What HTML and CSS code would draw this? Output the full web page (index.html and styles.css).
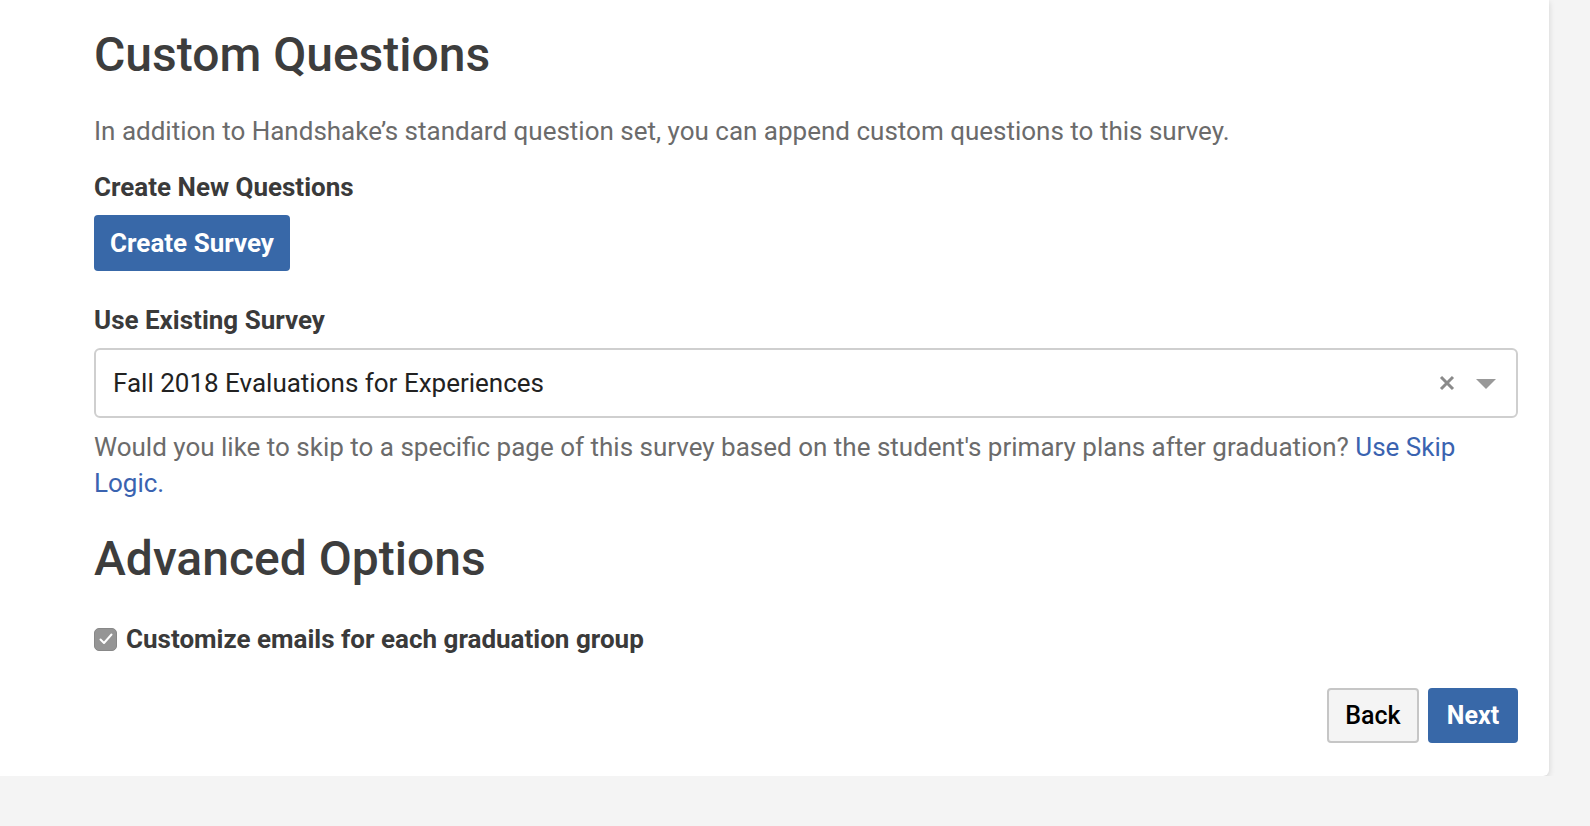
FILE: index.html
```html
<!DOCTYPE html>
<html>
<head>
<meta charset="utf-8">
<link rel="stylesheet" href="styles.css">
</head>
<body>
<div class="card">
  <h1 class="title">Custom Questions</h1>
  <p class="intro">In addition to Handshake’s standard question set, you can append custom questions to this survey.</p>
  <div class="label">Create New Questions</div>
  <button class="btn btn-primary btn-create">Create Survey</button>
  <div class="label label-existing">Use Existing Survey</div>
  <div class="select">
    <span class="select-value">Fall 2018 Evaluations for Experiences</span>
    <span class="select-icons">
      <svg class="clear" width="16" height="16" viewBox="0 0 16 16"><path d="M2 2 L14 14 M14 2 L2 14" stroke="#8a8a8a" stroke-width="3" stroke-linecap="butt"/></svg>
      <svg class="caret" width="20" height="10" viewBox="0 0 20 10"><path d="M0 0 H20 L10 10 Z" fill="#999"/></svg>
    </span>
  </div>
  <p class="help">Would you like to skip to a specific page of this survey based on the student's primary plans after graduation? <a class="link" href="#">Use Skip Logic.</a></p>
  <h1 class="title title-adv">Advanced Options</h1>
  <label class="check-row">
    <span class="checkbox"><svg width="16" height="14" viewBox="0 0 16 14"><path d="M2.5 7.5 L6 11 L13.5 2.5" fill="none" stroke="#fff" stroke-width="2" stroke-linecap="round" stroke-linejoin="round"/></svg></span>
    <span class="check-text">Customize emails for each graduation group</span>
  </label>
  <div class="actions">
    <button class="btn btn-back">Back</button>
    <button class="btn btn-primary btn-next">Next</button>
  </div>
</div>
</body>
</html>
```

FILE: styles.css
```css
html, body {
  margin: 0;
  padding: 0;
  background: #f4f4f4;
  font-family: Roboto, "Liberation Sans", sans-serif;
}
.card {
  width: 1549px;
  box-sizing: border-box;
  background: #fff;
  padding: 25px 31px 33px 94px;
  border-bottom-right-radius: 6px;
  box-shadow: 0 2px 6px rgba(0,0,0,0.14);
}
.title {
  margin: 0;
  font-size: 48px;
  line-height: 60px;
  font-weight: 500;
  color: #3d3d3d;
}
.intro {
  margin: 28px 0 0;
  font-size: 26px;
  line-height: 36px;
  color: #6b6b6b;
}
.label {
  margin-top: 22px;
  font-size: 26px;
  line-height: 32px;
  font-weight: 700;
  color: #3a3a3a;
}
.label-existing {
  margin-top: 33px;
}
.btn {
  font-family: Roboto, "Liberation Sans", sans-serif;
  border-radius: 4px;
  cursor: pointer;
  box-sizing: border-box;
}
.btn-primary {
  background: #3868a8;
  color: #fff;
  border: none;
  font-weight: 700;
}
.btn-create {
  display: block;
  margin-top: 12px;
  width: 196px;
  height: 56px;
  font-size: 26px;
  padding: 0;
}
.select {
  margin-top: 12px;
  height: 70px;
  box-sizing: border-box;
  border: 2px solid #cfcfcf;
  border-radius: 6px;
  display: flex;
  align-items: center;
  justify-content: space-between;
  padding: 0 20px 0 17px;
}
.select-value {
  font-size: 26px;
  color: #222;
}
.select-icons {
  display: flex;
  align-items: center;
  gap: 21px;
}
.clear {
  display: block;
}
.caret {
  display: block;
  margin-top: 1px;
}
.help {
  margin: 11px 0 0;
  font-size: 26px;
  line-height: 36px;
  color: #6b6b6b;
}
.link {
  color: #3a63b0;
  text-decoration: none;
}
.title-adv {
  margin-top: 28px;
}
.check-row {
  margin-top: 34px;
  display: flex;
  align-items: center;
  gap: 9px;
}
.checkbox {
  width: 23px;
  height: 23px;
  box-sizing: border-box;
  background: #959595;
  border: 1px solid #888;
  border-radius: 5px;
  display: flex;
  align-items: center;
  justify-content: center;
}
.check-text {
  font-size: 26px;
  line-height: 32px;
  font-weight: 700;
  color: #3a3a3a;
}
.actions {
  margin-top: 33px;
  display: flex;
  justify-content: flex-end;
  gap: 9px;
}
.btn-back {
  width: 92px;
  height: 55px;
  background: #f4f4f4;
  border: 2px solid #c6c6c6;
  color: #000;
  font-size: 25px;
  font-weight: 500;
}
.btn-next {
  width: 90px;
  height: 55px;
  font-size: 25px;
}
```
